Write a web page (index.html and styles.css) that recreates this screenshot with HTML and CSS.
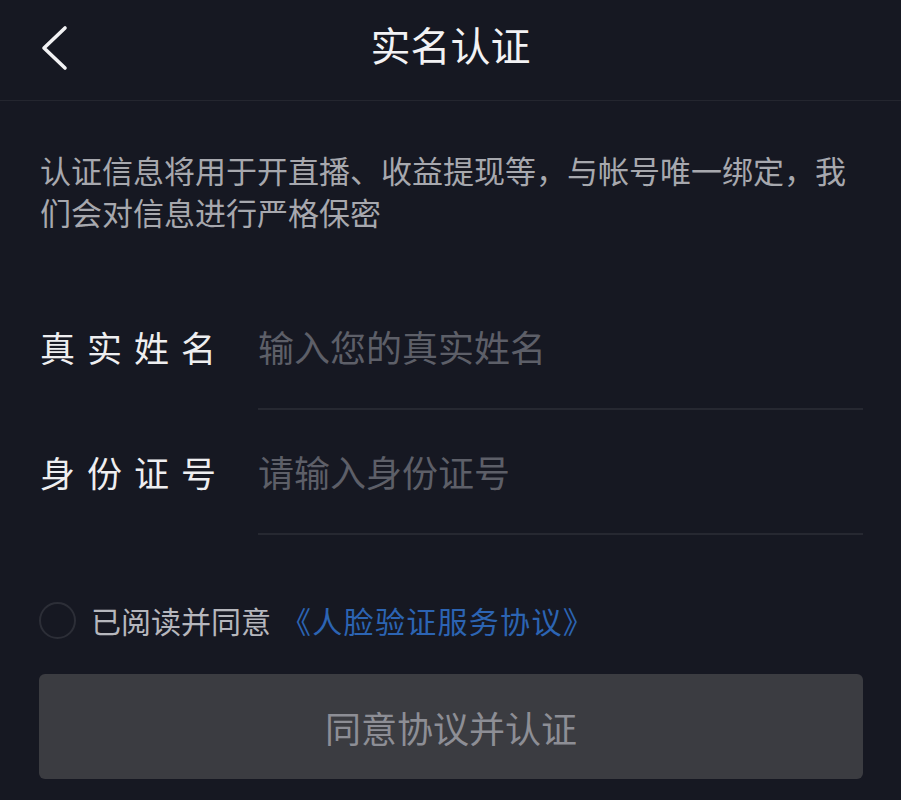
FILE: index.html
```html
<!DOCTYPE html>
<html lang="zh-CN">
<head>
<meta charset="utf-8">
<title>实名认证</title>
<link rel="stylesheet" href="styles.css">
</head>
<body>
<div class="page">
  <header class="topbar">
    <div class="back">
      <svg width="30" height="46" viewBox="0 0 30 46" aria-hidden="true">
        <path d="M25 3 L4 23 L25 43" fill="none" stroke="#f2f2f4" stroke-width="3.6" stroke-linecap="round" stroke-linejoin="round"/>
      </svg>
    </div>
    <h1 class="title">实名认证</h1>
    <div class="spacer"></div>
  </header>

  <p class="desc">认证信息将用于开直播、收益提现等，与帐号唯一绑定，我们会对信息进行严格保密</p>

  <div class="form">
    <div class="row">
      <span class="label">真实姓名</span>
      <div class="field"><span class="placeholder">输入您的真实姓名</span></div>
    </div>
    <div class="row">
      <span class="label">身份证号</span>
      <div class="field"><span class="placeholder">请输入身份证号</span></div>
    </div>
  </div>

  <div class="agree">
    <span class="radio"></span>
    <span class="agree-text">已阅读并同意</span>
    <span class="agree-link">《人脸验证服务协议》</span>
  </div>

  <div class="btn">同意协议并认证</div>
</div>
</body>
</html>
```

FILE: styles.css
```css
html, body {
  margin: 0;
  padding: 0;
  background: #161822;
}
body {
  font-family: "Noto Sans CJK SC", "Noto Sans", sans-serif;
  color: #e9e9ec;
}
.page {
  width: 901px;
  min-height: 800px;
  background: #161822;
}
.topbar {
  height: 100px;
  border-bottom: 1px solid #24262f;
  display: grid;
  grid-template-columns: 1fr auto 1fr;
  align-items: center;
}
.back {
  padding-left: 40px;
  display: flex;
  align-items: center;
  padding-bottom: 4px;
}
.title {
  margin: 0;
  font-size: 40px;
  font-weight: 400;
  color: #f2f2f4;
  line-height: 1;
  padding-bottom: 12px;
}
.desc {
  margin: 0;
  padding: 48px 40px 0 40px;
  font-size: 31px;
  line-height: 42px;
  color: #a7a8ae;
}
.form {
  margin-top: 52px;
  padding-left: 40px;
  padding-right: 38px;
}
.row {
  display: flex;
  align-items: stretch;
}
.label {
  width: 218px;
  flex: none;
  font-size: 35px;
  letter-spacing: 12px;
  color: #eeeef0;
  display: flex;
  align-items: center;
  padding-bottom: 2px;
}
.field {
  flex: 1;
  height: 123px;
  border-bottom: 2px solid #262831;
  display: flex;
  align-items: center;
}
.placeholder {
  font-size: 36px;
  color: #5d5f68;
  padding-bottom: 2px;
}
.agree {
  display: flex;
  align-items: center;
  margin-top: 65px;
  padding-left: 39px;
  height: 40px;
}
.radio {
  width: 33px;
  height: 33px;
  border: 2px solid #2c2e37;
  border-radius: 50%;
  flex: none;
  margin-right: 15px;
}
.agree-text {
  font-size: 30px;
  color: #b6b7bd;
}
.agree-link {
  font-size: 30px;
  letter-spacing: 1.3px;
  color: #2c64b3;
  margin-left: 10px;
}
.btn {
  margin: 34px 38px 0 39px;
  height: 105px;
  background: #3b3c41;
  border-radius: 6px;
  display: flex;
  align-items: center;
  justify-content: center;
  font-size: 36px;
  color: #8d8e95;
}
```
